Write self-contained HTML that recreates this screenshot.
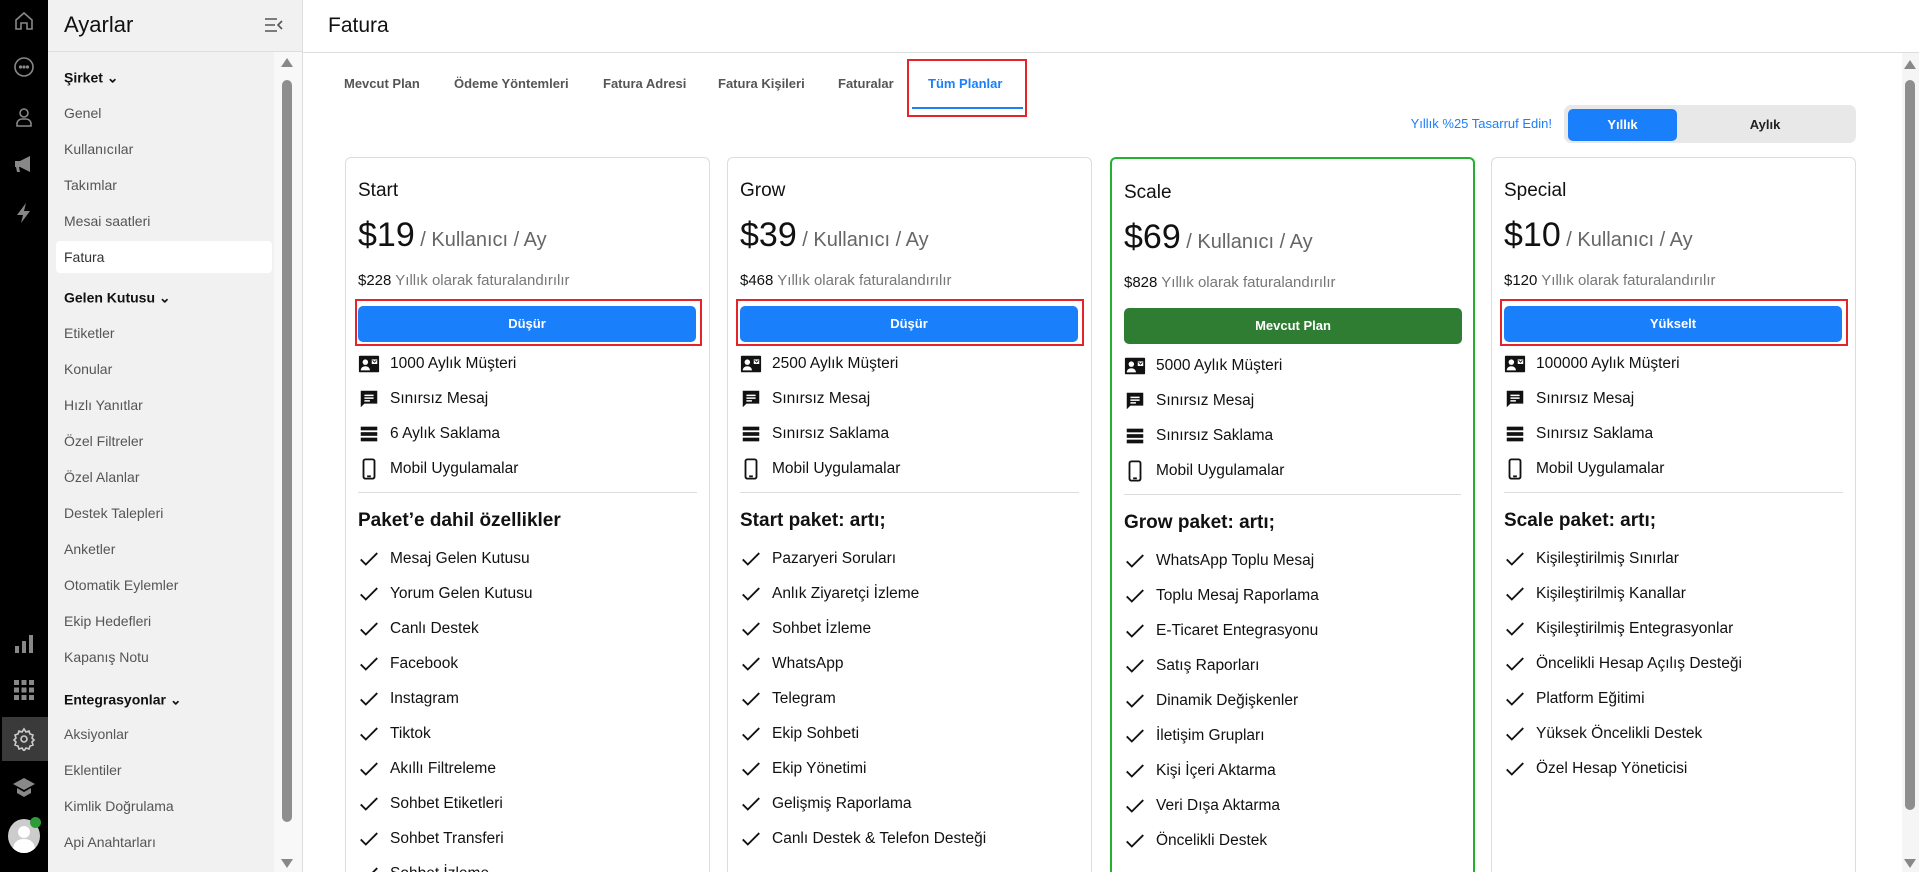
<!DOCTYPE html>
<html><head><meta charset="utf-8"><style>
*{box-sizing:border-box;margin:0;padding:0}
html,body{width:1919px;height:872px;overflow:hidden}
body{font-family:"Liberation Sans",sans-serif;background:#fff;position:relative;color:#111}
.rail{position:absolute;left:0;top:0;width:48px;height:872px;background:#000}
.rail svg{position:absolute;left:12px;width:24px;height:24px}
.side{position:absolute;left:48px;top:0;width:255px;height:872px;background:#f1f1f1;border-right:1px solid #ddd;overflow:hidden}
.side .hd{height:52px;border-bottom:1px solid #ddd;position:relative}
.side .hd b{position:absolute;left:16px;top:12px;font-size:22px;font-weight:normal;color:#111}
.si{position:absolute;left:16px;font-size:14px;color:#555;transform:translateY(-50%)}
.sh{position:absolute;left:16px;font-size:14px;color:#111;font-weight:bold;transform:translateY(-50%)}
.sel{position:absolute;left:8px;top:241px;width:216px;height:32px;background:#fff;border-radius:4px}
.sb{position:absolute;left:234px;top:80px;width:10px;height:742px;background:#8e8e8e;border-radius:5px}
.main{position:absolute;left:303px;top:0;width:1616px;height:872px;overflow:hidden}
.mh{height:53px;border-bottom:1px solid #ddd;position:relative}
.mh b{position:absolute;left:25px;top:14px;font-size:21px;font-weight:normal}
.tab{position:absolute;top:76px;font-size:13px;font-weight:bold;color:#555}
.card{position:absolute;top:157px;width:365px;height:715px;border:1px solid #ddd;border-bottom:none;border-radius:6px 6px 0 0;background:#fff;overflow:hidden}
.card .t{position:absolute;left:12px;top:22px;font-size:19px}
.price{position:absolute;left:12px;top:58px;font-size:34px;white-space:nowrap}
.price span{font-size:20px;color:#666}
.bill{position:absolute;left:12px;top:114px;font-size:15px;color:#111;white-space:nowrap}
.bill span{color:#777}
.btn{position:absolute;left:12px;top:148px;width:338px;height:36px;border-radius:5px;background:#1a7ffb;color:#fff;font-size:13px;font-weight:bold;text-align:center;line-height:36px}
.red{position:absolute;border:2px solid #e3242b}
.f{position:absolute;left:12px;font-size:15.5px;white-space:nowrap;display:flex;align-items:center;transform:translateY(-50%)}
.f svg{width:22px;height:22px;margin-right:10px}
.dv{position:absolute;left:12px;right:12px;top:334px;border-top:1px solid #ddd}
.h{position:absolute;left:12px;top:352px;font-size:19px;font-weight:bold}
.c{position:absolute;left:12px;font-size:15.5px;white-space:nowrap;display:flex;align-items:center;transform:translateY(-50%)}
.c svg{width:22px;height:22px;margin-right:10px}
</style></head><body>
<div class="rail">
<svg style="top:9px" viewBox="0 0 24 24" fill="none" stroke="#888" stroke-width="1.6"><path d="M4 11l8-7 8 7v9h-5v-6h-6v6H4z"/></svg>
<svg style="top:55px" viewBox="0 0 24 24" fill="none" stroke="#888" stroke-width="1.6"><circle cx="12" cy="12" r="9"/><circle cx="8.5" cy="12" r=".8" fill="#888"/><circle cx="12" cy="12" r=".8" fill="#888"/><circle cx="15.5" cy="12" r=".8" fill="#888"/></svg>
<svg style="top:105px" viewBox="0 0 24 24" fill="none" stroke="#888" stroke-width="1.6"><circle cx="12" cy="8" r="4"/><path d="M5 21v-3a5 5 0 0 1 5-4h4a5 5 0 0 1 5 4v3z"/></svg>
<svg style="top:152px" viewBox="0 0 24 24" fill="#888"><path d="M3 9h5l10-5v16l-10-5H7l1 5H5l-1-5H3z"/></svg>
<svg style="top:201px" viewBox="0 0 24 24" fill="#888"><path d="M14 2L5 14h6l-2 8 9-12h-6z"/></svg>
<svg style="top:632px" viewBox="0 0 24 24" fill="#888"><rect x="3" y="14" width="4" height="7"/><rect x="10" y="9" width="4" height="12"/><rect x="17" y="3" width="4" height="18"/></svg>
<svg style="top:678px" viewBox="0 0 24 24" fill="#888"><rect x="2" y="2" width="5" height="5"/><rect x="9.5" y="2" width="5" height="5"/><rect x="17" y="2" width="5" height="5"/><rect x="2" y="9.5" width="5" height="5"/><rect x="9.5" y="9.5" width="5" height="5"/><rect x="17" y="9.5" width="5" height="5"/><rect x="2" y="17" width="5" height="5"/><rect x="9.5" y="17" width="5" height="5"/><rect x="17" y="17" width="5" height="5"/></svg>
<div style="position:absolute;left:2px;top:717px;width:46px;height:44px;background:#3a3a3a"></div>
<svg style="top:727px" viewBox="0 0 24 24" fill="none" stroke="#ccc" stroke-width="1.6"><circle cx="12" cy="12" r="3"/><path d="M12 2l2 3 3-1 1 3 3 1-1 3 2 2-2 2 1 3-3 1-1 3-3-1-2 3-2-3-3 1-1-3-3-1 1-3-2-2 2-2-1-3 3-1 1-3 3 1z"/></svg>
<svg style="top:775px" viewBox="0 0 24 24" fill="#888"><path d="M12 3L1 9l11 6 11-6z"/><path d="M5 13v5l7 4 7-4v-5l-7 4z"/></svg>
<div style="position:absolute;left:8px;top:819px;width:32px;height:34px;border-radius:50%;background:#ccc;overflow:hidden"><div style="position:absolute;left:10px;top:7px;width:12px;height:12px;border-radius:50%;background:#fff"></div><div style="position:absolute;left:5px;top:20px;width:22px;height:14px;border-radius:10px 10px 0 0;background:#fff"></div></div>
<div style="position:absolute;left:30px;top:817px;width:11px;height:11px;border-radius:50%;background:#2e9a3a"></div>
</div>

<div class="side">
<div class="hd"><b>Ayarlar</b>
<svg style="position:absolute;left:216px;top:17px" width="20" height="16" viewBox="0 0 20 16" fill="none" stroke="#555" stroke-width="1.6"><path d="M1 2h12M1 8h10M1 14h12M18 4l-4 4 4 4"/></svg></div>
<div class="sel"></div>
<div class="sh" style="top:78px">Şirket ⌄</div>
<div class="si" style="top:113px">Genel</div>
<div class="si" style="top:149px">Kullanıcılar</div>
<div class="si" style="top:185px">Takımlar</div>
<div class="si" style="top:221px">Mesai saatleri</div>
<div class="si" style="top:257px;color:#333">Fatura</div>
<div class="sh" style="top:298px">Gelen Kutusu ⌄</div>
<div class="si" style="top:333px">Etiketler</div>
<div class="si" style="top:369px">Konular</div>
<div class="si" style="top:405px">Hızlı Yanıtlar</div>
<div class="si" style="top:441px">Özel Filtreler</div>
<div class="si" style="top:477px">Özel Alanlar</div>
<div class="si" style="top:513px">Destek Talepleri</div>
<div class="si" style="top:549px">Anketler</div>
<div class="si" style="top:585px">Otomatik Eylemler</div>
<div class="si" style="top:621px">Ekip Hedefleri</div>
<div class="si" style="top:657px">Kapanış Notu</div>
<div class="sh" style="top:700px">Entegrasyonlar ⌄</div>
<div class="si" style="top:734px">Aksiyonlar</div>
<div class="si" style="top:770px">Eklentiler</div>
<div class="si" style="top:806px">Kimlik Doğrulama</div>
<div class="si" style="top:842px">Api Anahtarları</div>
<div style="position:absolute;left:226px;top:52px;width:28px;height:820px;background:#f8f8f8"></div>
<div class="sb"></div>
<div style="position:absolute;left:233px;top:58px;border:6px solid transparent;border-bottom:9px solid #888;border-top:0"></div>
<div style="position:absolute;left:233px;top:859px;border:6px solid transparent;border-top:9px solid #888;border-bottom:0"></div>
</div>

<div class="main">
<div class="mh"><b>Fatura</b></div>
<div class="tab" style="left:41px">Mevcut Plan</div>
<div class="tab" style="left:151px">Ödeme Yöntemleri</div>
<div class="tab" style="left:300px">Fatura Adresi</div>
<div class="tab" style="left:415px">Fatura Kişileri</div>
<div class="tab" style="left:535px">Faturalar</div>
<div class="tab" style="left:625px;color:#1a7ffb">Tüm Planlar</div>
<div style="position:absolute;left:609px;top:107px;width:111px;height:2px;background:#1a7ffb"></div>
<div class="red" style="left:604px;top:59px;width:120px;height:58px"></div>
<div style="position:absolute;right:367px;top:116px;font-size:13px;color:#1a7ffb">Yıllık %25 Tasarruf Edin!</div>
<div style="position:absolute;left:1261px;top:105px;width:292px;height:38px;background:#e8e8e8;border-radius:7px"></div>
<div style="position:absolute;left:1265px;top:109px;width:109px;height:32px;background:#1a7ffb;border-radius:5px;color:#fff;font-size:13px;font-weight:bold;text-align:center;line-height:32px">Yıllık</div>
<div style="position:absolute;left:1374px;top:109px;width:176px;height:32px;color:#222;font-size:13px;font-weight:bold;text-align:center;line-height:32px">Aylık</div>
<div style="position:absolute;right:0;top:53px;width:17px;height:819px;background:#f5f5f5"></div>
<div style="position:absolute;right:4px;top:80px;width:10px;height:730px;background:#8e8e8e;border-radius:5px"></div>
<div style="position:absolute;right:3px;top:60px;border:6px solid transparent;border-bottom:9px solid #888;border-top:0"></div>
<div style="position:absolute;right:3px;top:859px;border:6px solid transparent;border-top:9px solid #888;border-bottom:0"></div>
</div>

<svg width="0" height="0" style="position:absolute"><defs>
<symbol id="i1" viewBox="0 0 24 24"><rect x="1" y="3" width="22" height="18" rx="1" fill="#111"/><circle cx="8" cy="10" r="3" fill="#fff"/><path d="M3 19c0-3 2.5-4.5 5-4.5s5 1.5 5 4.5z" fill="#fff"/><path d="M15 7h6v5h-6z" fill="#fff"/><path d="M16 8l2 2 2-2" stroke="#111" fill="none"/></symbol>
<symbol id="i2" viewBox="0 0 24 24"><path d="M3 3h18v14H7l-4 4z" fill="#111"/><path d="M7 8h10M7 11h10M7 14h6" stroke="#fff" stroke-width="1.6"/></symbol>
<symbol id="i3" viewBox="0 0 24 24"><rect x="3" y="4" width="18" height="4" fill="#111"/><rect x="3" y="10" width="18" height="4" fill="#111"/><rect x="3" y="16" width="18" height="4" fill="#111"/></symbol>
<symbol id="i4" viewBox="0 0 24 24"><rect x="6" y="1.5" width="12" height="21" rx="2" fill="none" stroke="#111" stroke-width="2"/><path d="M10 20h4" stroke="#111" stroke-width="2"/></symbol>
<symbol id="ck" viewBox="0 0 24 24"><path d="M3 12.5l5.5 5.5L21 5.5" fill="none" stroke="#111" stroke-width="2"/></symbol>
</defs></svg>

<div class="card" style="left:345px">
<div class="t">Start</div>
<div class="price">$19<span> / Kullanıcı / Ay</span></div>
<div class="bill">$228 <span>Yıllık olarak faturalandırılır</span></div>
<div class="btn">Düşür</div>
<div class="f" style="top:206px"><svg><use href="#i1"/></svg>1000 Aylık Müşteri</div>
<div class="f" style="top:241px"><svg><use href="#i2"/></svg>Sınırsız Mesaj</div>
<div class="f" style="top:276px"><svg><use href="#i3"/></svg>6 Aylık Saklama</div>
<div class="f" style="top:311px"><svg><use href="#i4"/></svg>Mobil Uygulamalar</div>
<div class="dv"></div>
<div class="h">Paket’e dahil özellikler</div>
<div class="c" style="top:401px"><svg><use href="#ck"/></svg>Mesaj Gelen Kutusu</div>
<div class="c" style="top:436px"><svg><use href="#ck"/></svg>Yorum Gelen Kutusu</div>
<div class="c" style="top:471px"><svg><use href="#ck"/></svg>Canlı Destek</div>
<div class="c" style="top:506px"><svg><use href="#ck"/></svg>Facebook</div>
<div class="c" style="top:541px"><svg><use href="#ck"/></svg>Instagram</div>
<div class="c" style="top:576px"><svg><use href="#ck"/></svg>Tiktok</div>
<div class="c" style="top:611px"><svg><use href="#ck"/></svg>Akıllı Filtreleme</div>
<div class="c" style="top:646px"><svg><use href="#ck"/></svg>Sohbet Etiketleri</div>
<div class="c" style="top:681px"><svg><use href="#ck"/></svg>Sohbet Transferi</div>
<div class="c" style="top:716px"><svg><use href="#ck"/></svg>Sohbet İzleme</div>
</div>
<div class="red" style="left:355px;top:299px;width:347px;height:47px"></div>

<div class="card" style="left:727px">
<div class="t">Grow</div>
<div class="price">$39<span> / Kullanıcı / Ay</span></div>
<div class="bill">$468 <span>Yıllık olarak faturalandırılır</span></div>
<div class="btn">Düşür</div>
<div class="f" style="top:206px"><svg><use href="#i1"/></svg>2500 Aylık Müşteri</div>
<div class="f" style="top:241px"><svg><use href="#i2"/></svg>Sınırsız Mesaj</div>
<div class="f" style="top:276px"><svg><use href="#i3"/></svg>Sınırsız Saklama</div>
<div class="f" style="top:311px"><svg><use href="#i4"/></svg>Mobil Uygulamalar</div>
<div class="dv"></div>
<div class="h">Start paket: artı;</div>
<div class="c" style="top:401px"><svg><use href="#ck"/></svg>Pazaryeri Soruları</div>
<div class="c" style="top:436px"><svg><use href="#ck"/></svg>Anlık Ziyaretçi İzleme</div>
<div class="c" style="top:471px"><svg><use href="#ck"/></svg>Sohbet İzleme</div>
<div class="c" style="top:506px"><svg><use href="#ck"/></svg>WhatsApp</div>
<div class="c" style="top:541px"><svg><use href="#ck"/></svg>Telegram</div>
<div class="c" style="top:576px"><svg><use href="#ck"/></svg>Ekip Sohbeti</div>
<div class="c" style="top:611px"><svg><use href="#ck"/></svg>Ekip Yönetimi</div>
<div class="c" style="top:646px"><svg><use href="#ck"/></svg>Gelişmiş Raporlama</div>
<div class="c" style="top:681px"><svg><use href="#ck"/></svg>Canlı Destek &amp; Telefon Desteği</div>
</div>
<div class="red" style="left:736px;top:299px;width:348px;height:47px"></div>

<div class="card" style="left:1110px;border:2px solid #22b22e;border-bottom:none">
<div class="t" style="top:23px">Scale</div>
<div class="price" style="top:59px">$69<span> / Kullanıcı / Ay</span></div>
<div class="bill" style="top:115px">$828 <span>Yıllık olarak faturalandırılır</span></div>
<div class="btn" style="top:149px;background:#2e7d32">Mevcut Plan</div>
<div class="f" style="top:207px"><svg><use href="#i1"/></svg>5000 Aylık Müşteri</div>
<div class="f" style="top:242px"><svg><use href="#i2"/></svg>Sınırsız Mesaj</div>
<div class="f" style="top:277px"><svg><use href="#i3"/></svg>Sınırsız Saklama</div>
<div class="f" style="top:312px"><svg><use href="#i4"/></svg>Mobil Uygulamalar</div>
<div class="dv" style="top:335px"></div>
<div class="h" style="top:353px">Grow paket: artı;</div>
<div class="c" style="top:402px"><svg><use href="#ck"/></svg>WhatsApp Toplu Mesaj</div>
<div class="c" style="top:437px"><svg><use href="#ck"/></svg>Toplu Mesaj Raporlama</div>
<div class="c" style="top:472px"><svg><use href="#ck"/></svg>E-Ticaret Entegrasyonu</div>
<div class="c" style="top:507px"><svg><use href="#ck"/></svg>Satış Raporları</div>
<div class="c" style="top:542px"><svg><use href="#ck"/></svg>Dinamik Değişkenler</div>
<div class="c" style="top:577px"><svg><use href="#ck"/></svg>İletişim Grupları</div>
<div class="c" style="top:612px"><svg><use href="#ck"/></svg>Kişi İçeri Aktarma</div>
<div class="c" style="top:647px"><svg><use href="#ck"/></svg>Veri Dışa Aktarma</div>
<div class="c" style="top:682px"><svg><use href="#ck"/></svg>Öncelikli Destek</div>
</div>

<div class="card" style="left:1491px">
<div class="t">Special</div>
<div class="price">$10<span> / Kullanıcı / Ay</span></div>
<div class="bill">$120 <span>Yıllık olarak faturalandırılır</span></div>
<div class="btn">Yükselt</div>
<div class="f" style="top:206px"><svg><use href="#i1"/></svg>100000 Aylık Müşteri</div>
<div class="f" style="top:241px"><svg><use href="#i2"/></svg>Sınırsız Mesaj</div>
<div class="f" style="top:276px"><svg><use href="#i3"/></svg>Sınırsız Saklama</div>
<div class="f" style="top:311px"><svg><use href="#i4"/></svg>Mobil Uygulamalar</div>
<div class="dv"></div>
<div class="h">Scale paket: artı;</div>
<div class="c" style="top:401px"><svg><use href="#ck"/></svg>Kişileştirilmiş Sınırlar</div>
<div class="c" style="top:436px"><svg><use href="#ck"/></svg>Kişileştirilmiş Kanallar</div>
<div class="c" style="top:471px"><svg><use href="#ck"/></svg>Kişileştirilmiş Entegrasyonlar</div>
<div class="c" style="top:506px"><svg><use href="#ck"/></svg>Öncelikli Hesap Açılış Desteği</div>
<div class="c" style="top:541px"><svg><use href="#ck"/></svg>Platform Eğitimi</div>
<div class="c" style="top:576px"><svg><use href="#ck"/></svg>Yüksek Öncelikli Destek</div>
<div class="c" style="top:611px"><svg><use href="#ck"/></svg>Özel Hesap Yöneticisi</div>
</div>
<div class="red" style="left:1500px;top:299px;width:348px;height:47px"></div>
</body></html>
